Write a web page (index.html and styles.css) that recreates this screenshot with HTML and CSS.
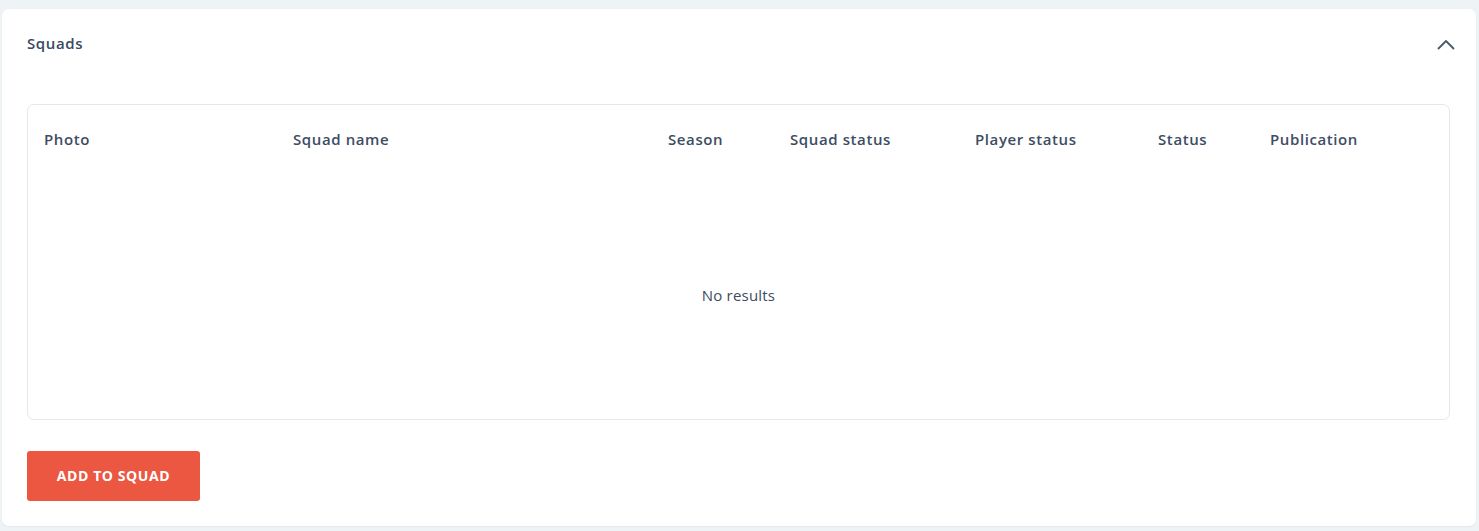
FILE: index.html
```html
<!DOCTYPE html>
<html lang="en">
<head>
<meta charset="utf-8">
<title>Squads</title>
<link rel="stylesheet" href="styles.css">
</head>
<body>
<section class="card">
  <header class="card-head">
    <h2 class="card-title">Squads</h2>
    <button class="collapse" aria-label="Collapse">
      <svg width="18" height="11" viewBox="0 0 18 11"><path d="M1.5 9.5 L9 2 L16.5 9.5" fill="none" stroke="#4a5a6e" stroke-width="1.8" stroke-linecap="round" stroke-linejoin="round"/></svg>
    </button>
  </header>
  <div class="table">
    <div class="thead">
      <div>Photo</div>
      <div>Squad name</div>
      <div>Season</div>
      <div>Squad status</div>
      <div>Player status</div>
      <div>Status</div>
      <div>Publication</div>
    </div>
    <div class="empty">No results</div>
  </div>
  <div class="actions">
    <button class="btn-primary">ADD TO SQUAD</button>
  </div>
</section>
</body>
</html>
```

FILE: styles.css
```css
html, body {
  margin: 0;
  padding: 0;
}
body {
  background: #eef3f6;
  padding: 9px 3px 5px 2px;
  font-family: "Open Sans", "Liberation Sans", sans-serif;
  color: #3d4c61;
}
.card {
  background: #ffffff;
  border-radius: 7px;
  padding: 0 26px 25px 25px;
  box-shadow: 0 1px 2px rgba(40, 60, 80, 0.06);
}
.card-head {
  height: 67px;
  display: flex;
  align-items: center;
  justify-content: space-between;
}
.card-title {
  margin: 0;
  font-size: 15px;
  font-weight: 600;
  color: #3a4a5f;
  letter-spacing: 0.6px;
}
.collapse {
  background: none;
  border: 0;
  padding: 0;
  margin-right: -5px;
  margin-top: 3px;
  display: flex;
  cursor: pointer;
}
.table {
  margin-top: 28px;
  border: 1px solid #e4e8ec;
  border-radius: 7px;
  box-sizing: border-box;
  height: 316px;
  display: flex;
  flex-direction: column;
}
.thead {
  display: grid;
  grid-template-columns: 249px 375px 122px 185px 183px 112px 1fr;
  padding: 23px 16px 0;
  font-size: 15px;
  font-weight: 600;
  line-height: 22px;
  color: #3d4d63;
  letter-spacing: 0.6px;
}
.empty {
  padding-top: 134px;
  text-align: center;
  font-size: 15px;
  line-height: 22px;
  color: #3d4c61;
  letter-spacing: 0.2px;
}
.actions {
  margin-top: 31px;
  display: flex;
}
.btn-primary {
  background: #eb5741;
  color: #ffffff;
  border: 0;
  border-radius: 3px;
  height: 50px;
  width: 173px;
  padding: 0 0 1px;
  font-family: "Open Sans", "Liberation Sans", sans-serif;
  font-size: 14px;
  font-weight: 700;
  letter-spacing: 0.6px;
  cursor: pointer;
}
```
